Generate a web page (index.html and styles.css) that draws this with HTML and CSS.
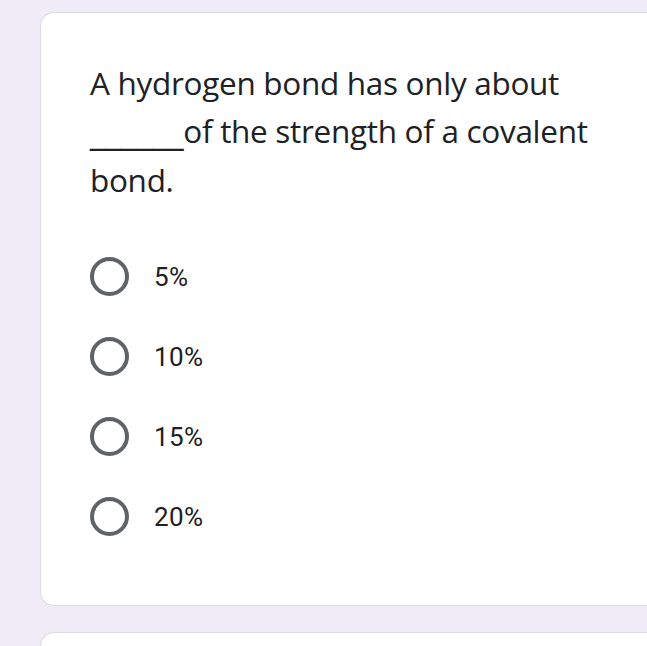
FILE: index.html
```html
<!DOCTYPE html>
<html>
<head>
<meta charset="utf-8">
<link rel="stylesheet" href="styles.css">
</head>
<body>
<div class="page">
  <div class="card">
    <div class="title">A hydrogen bond has only about <span class="blank">______</span>of the strength of a covalent bond.</div>
    <div class="options">
      <div class="option"><span class="radio"></span><span class="label">5%</span></div>
      <div class="option"><span class="radio"></span><span class="label">10%</span></div>
      <div class="option"><span class="radio"></span><span class="label">15%</span></div>
      <div class="option"><span class="radio"></span><span class="label">20%</span></div>
    </div>
  </div>
  <div class="card next"></div>
</div>
</body>
</html>
```

FILE: styles.css
```css
html, body {
  margin: 0;
  padding: 0;
  background: #efecf7;
  overflow: hidden;
  height: 646px;
}
.page {
  padding: 12px 0 0 40px;
  display: flex;
  flex-direction: column;
  gap: 26px;
}
.card {
  background: #fff;
  border: 1px solid #dadce0;
  border-right: none;
  border-radius: 14px 0 0 14px;
  padding: 46px 0 0 49px;
  height: 594px;
  box-sizing: border-box;
  flex: none;
}
.card.next {
  height: 60px;
  padding: 0;
}
.title {
  font-family: "Open Sans", sans-serif;
  font-size: 31.5px;
  line-height: 48px;
  color: #202124;
  width: 520px;
  letter-spacing: -0.3px;
}
.blank {
  font-family: "DejaVu Sans", sans-serif;
  letter-spacing: -0.2px;
}
.options {
  margin-top: 53px;
  display: flex;
  flex-direction: column;
  gap: 41px;
}
.option {
  display: flex;
  align-items: center;
  height: 39px;
}
.radio {
  width: 31px;
  height: 31px;
  border: 4px solid #5f6368;
  border-radius: 50%;
  flex: none;
}
.label {
  margin-left: 25px;
  font-family: Roboto, sans-serif;
  font-size: 26px;
  letter-spacing: 0.4px;
  color: #202124;
}
```
